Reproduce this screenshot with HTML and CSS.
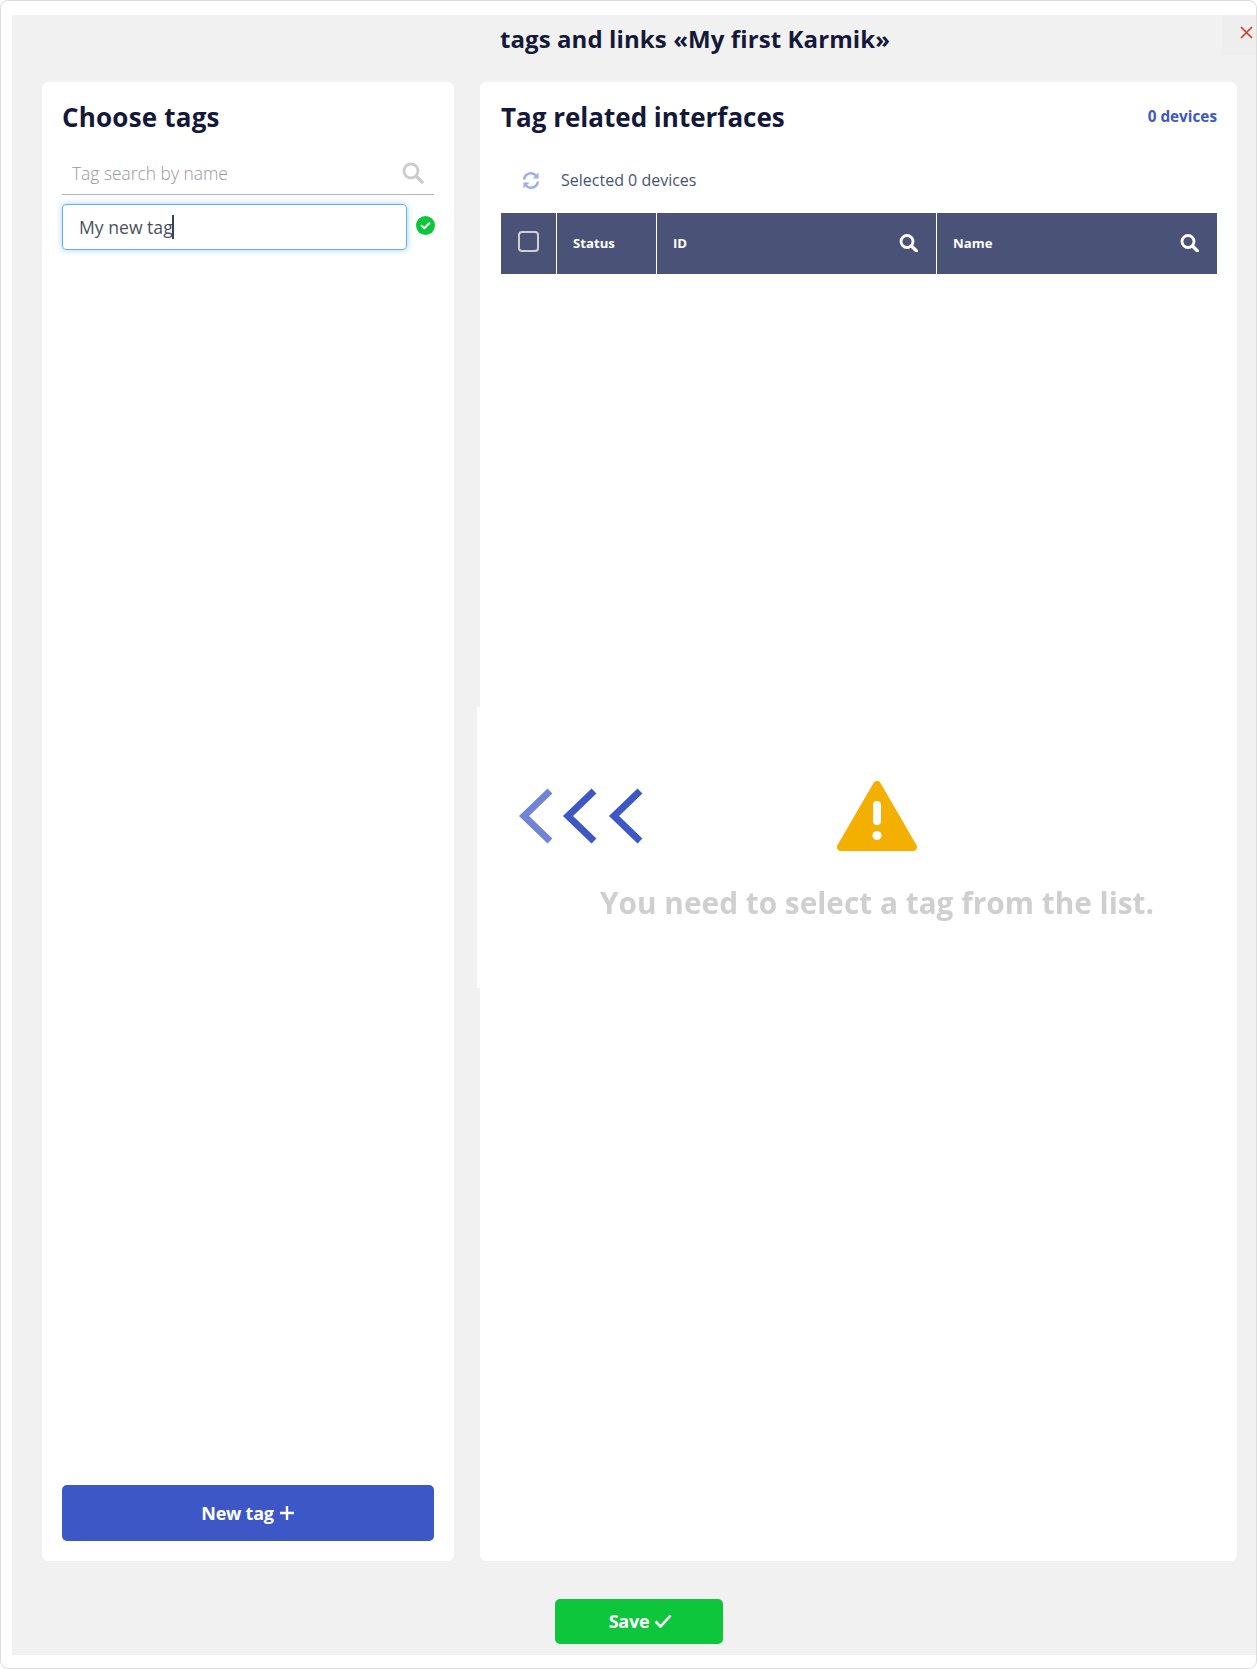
FILE: index.html
```html
<!DOCTYPE html>
<html lang="en">
<head>
<meta charset="UTF-8" />
<meta name="viewport" content="width=device-width, initial-scale=1" />
<title>Tags and links</title>
<link rel="stylesheet" href="styles.css">
</head>
<body>
<div class="frame">
  <div class="dialog">
    <button class="close" aria-label="Close">
      <svg width="13" height="13" viewBox="0 0 13 13"><path d="M1 1l11 11M12 1L1 12" stroke="#e0321e" stroke-width="1.6" fill="none"/></svg>
    </button>
    <h1 class="dialog-title">tags and links «My first Karmik»</h1>

    <div class="columns">
      <section class="card tags-card">
        <h2>Choose tags</h2>
        <div class="tag-search">
          <span>Tag search by name</span>
          <svg width="22" height="22" viewBox="0 0 22 22"><circle cx="9" cy="9" r="7" stroke="#ccc" stroke-width="2.8" fill="none"/><path d="M14 14l6 6" stroke="#ccc" stroke-width="3.4" stroke-linecap="round"/></svg>
        </div>
        <div class="tag-edit">
          <div class="tag-input">My new tag<i class="caret"></i></div>
          <svg width="19" height="19" viewBox="0 0 19 19"><circle cx="9.5" cy="9.5" r="9.5" fill="#0dc63b"/><path d="M5.6 9.8l2.7 2.5 5-5" stroke="#fff" stroke-width="2" fill="none" stroke-linecap="round" stroke-linejoin="round"/></svg>
        </div>
        <button class="btn btn-blue">New tag
          <svg width="16" height="16" viewBox="0 0 16 16"><path d="M8 1v14M1 8h14" stroke="#fff" stroke-width="2.4"/></svg>
        </button>
      </section>

      <section class="card iface-card">
        <div class="iface-head">
          <h2>Tag related interfaces</h2>
          <span class="count">0 devices</span>
        </div>
        <div class="selected">
          <svg width="18" height="17" viewBox="0 0 18 17"><path d="M2 7.5A7 7 0 0 1 14 3.5M16 9.5A7 7 0 0 1 4 13.5" stroke="#9dacea" stroke-width="2.4" fill="none"/><path d="M16.5 0.5v6h-6zM1.5 16.5v-6h6z" fill="#9dacea"/></svg>
          <span>Selected 0 devices</span>
        </div>
        <div class="table-head">
          <div class="col col-check"><i class="checkbox"></i></div>
          <div class="col col-status">Status</div>
          <div class="col col-id">ID
            <svg width="19" height="18" viewBox="0 0 19 18"><circle cx="8" cy="7.5" r="6" stroke="#fff" stroke-width="2.8" fill="none"/><path d="M12.5 12l5 5" stroke="#fff" stroke-width="3.4" stroke-linecap="round"/></svg>
          </div>
          <div class="col col-name">Name
            <svg width="19" height="18" viewBox="0 0 19 18"><circle cx="8" cy="7.5" r="6" stroke="#fff" stroke-width="2.8" fill="none"/><path d="M12.5 12l5 5" stroke="#fff" stroke-width="3.4" stroke-linecap="round"/></svg>
          </div>
        </div>

        <div class="notice">
          <div class="arrows">
            <svg class="arrow-faded" width="35" height="56" viewBox="0 0 35 56"><path d="M32 3L6 28l26 25" stroke="#3d57c6" stroke-width="7" fill="none"/></svg>
            <svg width="35" height="56" viewBox="0 0 35 56"><path d="M32 3L6 28l26 25" stroke="#3d57c6" stroke-width="7" fill="none"/></svg>
            <svg width="35" height="56" viewBox="0 0 35 56"><path d="M32 3L6 28l26 25" stroke="#3d57c6" stroke-width="7" fill="none"/></svg>
          </div>
          <svg width="80" height="70" viewBox="0 0 80 70"><path d="M40 4L4 66h72z" fill="#f4b000" stroke="#f4b000" stroke-width="8" stroke-linejoin="round"/><rect x="36" y="20" width="8" height="24" rx="4" fill="#fff"/><circle cx="40" cy="54.5" r="4.5" fill="#fff"/></svg>
          <p>You need to select a tag from the list.</p>
        </div>
      </section>
    </div>

    <div class="dialog-foot">
      <button class="btn btn-green">Save
        <svg width="18" height="14" viewBox="0 0 18 14"><path d="M1.5 7.5l5 5L16.5 1.5" stroke="#fff" stroke-width="2.6" fill="none"/></svg>
      </button>
    </div>
  </div>
</div>
</body>
</html>
```

FILE: styles.css
```css
* { box-sizing: border-box; }
html, body { margin: 0; padding: 0; }
body { font-family: "Open Sans", sans-serif; color: #14183a; background: #fff; }
h1, h2, p { margin: 0; }
button { font-family: inherit; border: none; cursor: pointer; }

.frame { width: 1257px; height: 1669px; border: 1px solid #ddd; border-radius: 8px; padding: 14px 0 13px 11px; }
.dialog { position: relative; height: 100%; background: #f1f1f1; display: flex; flex-direction: column; }
.dialog-title { height: 67px; padding: 7px 0 0 122px; font-size: 24px; line-height: 33px; font-weight: 700; text-align: center; letter-spacing: .1px; }
.close { position: absolute; top: 0; right: 0; width: 34px; height: 40px; background: #eee; padding: 0 0 6px 14px; display: flex; align-items: center; justify-content: center; }

.columns { flex: 1; display: flex; gap: 26px; padding: 0 19px 0 30px; min-height: 0; }
.card { background: #fff; border-radius: 6px; display: flex; flex-direction: column; }
.card h2 { font-size: 26px; line-height: 36px; font-weight: 700; margin-top: -1px; }

.tags-card { width: 412px; padding: 18px 20px 20px; }
.tags-card h2 { letter-spacing: .2px; }
.tag-search { margin-top: 18px; height: 42px; border-bottom: 1px solid #b5b5b5; padding: 0 10px 2px; display: flex; justify-content: space-between; align-items: center; color: #999; font-size: 17.4px; font-weight: 300; }
.tag-edit { margin-top: 9px; display: flex; justify-content: space-between; align-items: center; }
.tag-edit svg { margin: -3px -1px 0 0; }
.tag-input { width: 345px; height: 46px; border: 1px solid #64b0f2; border-radius: 4px; box-shadow: 0 0 6px rgba(100, 176, 242, .6); padding-left: 16px; font-size: 17.6px; line-height: 44px; color: #4a5060; display: flex; align-items: center; }
.caret { width: 2px; height: 24px; background: #3a4258; margin-left: -1px; }

.btn { height: 56px; border-radius: 5px; color: #fff; font-size: 18px; font-weight: 700; letter-spacing: -.25px; display: flex; align-items: center; justify-content: center; gap: 5px; }
.btn-blue { margin-top: auto; background: #3d57c6; }
.btn-green { width: 168px; height: 45px; background: #0dc63b; padding: 0 0 2px 3px; }

.iface-card { position: relative; flex: 1; padding: 18px 20px 0 21px; }
.iface-head { display: flex; justify-content: space-between; align-items: flex-start; }
.count { font-size: 15.3px; font-weight: 700; color: #3d57c6; line-height: 30px; margin-top: 1px; }
.selected { margin-top: 28px; height: 34px; padding-left: 21px; display: flex; align-items: center; gap: 21px; font-size: 16px; color: #4a5277; }

.table-head { margin-top: 16px; height: 61px; background: #4a5277; color: #fff; display: flex; font-size: 13.2px; font-weight: 700; }
.col { display: flex; align-items: center; justify-content: space-between; border-left: 1px solid #fff; padding-bottom: 2px; }
.col-check { width: 55px; border-left: none; justify-content: center; padding-bottom: 5px; }
.col-status { width: 100px; padding-left: 16px; }
.col-id { width: 280px; padding: 0 18px 2px 16px; }
.col-name { flex: 1; padding: 0 18px 2px 16px; }
.checkbox { width: 21px; height: 21px; border: 2px solid #d0d0d0; border-radius: 4px; }

.notice { position: absolute; top: 625px; left: -3px; right: 0; height: 281px; background: #fff; padding: 74px 0 0 40px; display: flex; flex-direction: column; align-items: center; filter: blur(.7px); }
.notice p { margin-top: 32px; font-size: 29.8px; line-height: 40px; font-weight: 700; color: #cfcfcf; }
.arrows { position: absolute; left: 41px; top: 81px; display: flex; }
.arrows svg:nth-child(2) { margin-left: 9px; }
.arrows svg:nth-child(3) { margin-left: 11px; }
.arrow-faded { opacity: .72; }

.dialog-foot { height: 94px; padding: 38px 0 0 543px; }
```
